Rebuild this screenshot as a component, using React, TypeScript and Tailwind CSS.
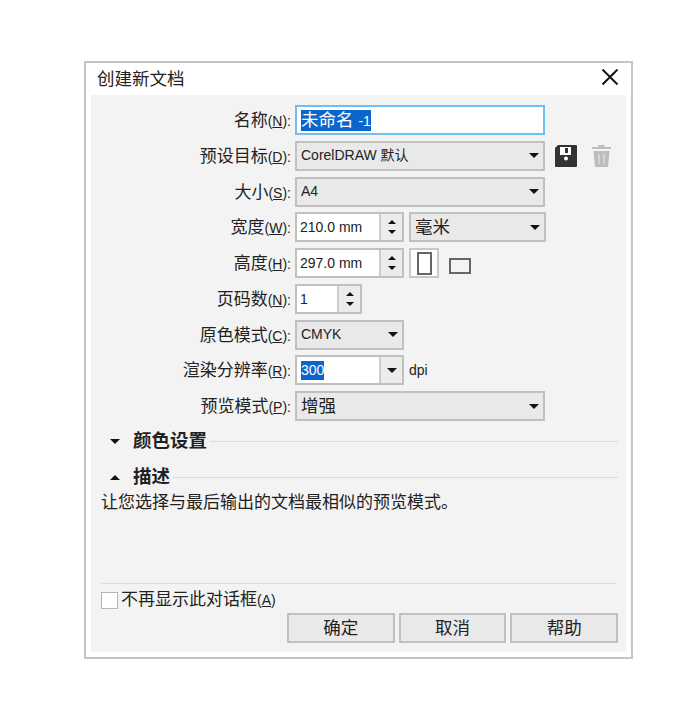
import type { ReactNode } from 'react';

const cjk = "font-['Liberation_Sans','Noto_Sans_CJK_SC',sans-serif]";

function Caret({ up = false, w = 16 }: { up?: boolean; w?: number }) {
  return (
    <svg width={w} height={w / 2} viewBox="0 0 16 8" className="block">
      <path d={up ? 'M0 8L8 0L16 8Z' : 'M0 0L16 0L8 8Z'} fill="#111" />
    </svg>
  );
}

function Label({ text, hint }: { text: string; hint: string }) {
  return (
    <div className="w-[204px] pr-[4px] pt-[2px] text-right text-[17px] text-[#222] leading-[30px] whitespace-nowrap">
      {text}
      <span className="text-[14px]">
        (<span className="underline">{hint}</span>):
      </span>
    </div>
  );
}

function Row({ label, hint, children }: { label: string; hint: string; children: ReactNode }) {
  return (
    <div className="flex items-center h-[30px]">
      <Label text={label} hint={hint} />
      {children}
    </div>
  );
}

function Select({ value, className, small = false }: { value: string; className: string; small?: boolean }) {
  return (
    <div className={`flex items-center justify-between h-[30px] border-2 border-[#c0c0c0] bg-[#e9e9e9] pl-[4px] pr-[4px] ${className}`}>
      <span className={`${small ? 'text-[14px]' : 'text-[17.5px]'} text-[#222] whitespace-nowrap`}>{value}</span>
      <Caret w={10} />
    </div>
  );
}

function Spinner({ value, width }: { value: string; width: string }) {
  return (
    <div className={`flex h-[30px] border-2 border-[#c0c0c0] bg-white ${width}`}>
      <div className="flex-1 pl-[3px] text-[14px] leading-[26px] text-[#222]">{value}</div>
      <div className="flex w-[23px] flex-col items-center justify-between border-l-2 border-[#cccccc] bg-[#ececec] py-[6px]">
        <Caret up w={8} />
        <Caret w={8} />
      </div>
    </div>
  );
}

function SectionHead({ title, up = false }: { title: string; up?: boolean }) {
  return (
    <div className="flex items-center h-[24px] pl-[19px] pr-[8px]">
      <Caret up={up} w={10} />
      <span className="ml-[13px] text-[18.5px] font-bold text-[#222] whitespace-nowrap">{title}</span>
      <div className="ml-[3px] h-[1px] flex-1 bg-[#dcdcdc]" />
    </div>
  );
}

function Btn({ text }: { text: string }) {
  return (
    <div className="flex h-[30px] w-[107.67px] items-center justify-center border-2 border-[#c0c0c0] bg-[#e9e9e9] text-[17.5px] text-[#222]">
      {text}
    </div>
  );
}

export default function App() {
  return (
    <div className={`h-[714px] w-[700px] bg-white pl-[84px] pt-[61px] ${cjk}`}>
      <div className="flex h-[598px] w-[549px] flex-col border-2 border-[#c4c4c4] bg-white px-[5px] pb-[5px]">
        <div className="flex h-[32px] items-center justify-between pl-[6px] pr-[6px]">
          <span className="text-[17.5px] text-[#222]">创建新文档</span>
          <svg width="18" height="16" viewBox="0 0 18 16" className="mb-[5px] mr-[1px]">
            <path d="M1.5 0.5L16.5 15.5M16.5 0.5L1.5 15.5" stroke="#111" strokeWidth="2" fill="none" />
          </svg>
        </div>
        <div className="flex flex-1 flex-col bg-[#f3f3f3] pt-[10px]">
          <div className="flex flex-col gap-[5.75px]">
            <Row label="名称" hint="N">
              <div className="flex h-[30px] w-[250px] items-center border-2 border-[#6cc0f5] bg-white pl-[4px]">
                <span className="bg-[#0a66cc] text-[17.5px] leading-[20px] text-white whitespace-nowrap">
                  未命名 <span className="text-[14px]">-1</span>
                </span>
              </div>
            </Row>
            <Row label="预设目标" hint="D">
              <Select value="CorelDRAW 默认" className="w-[250px]" small />
              <svg width="22" height="22" viewBox="0 0 22 22" className="ml-[10px]">
                <path d="M3 0H21A1 1 0 0 1 22 1V21A1 1 0 0 1 21 22H1A1 1 0 0 1 0 21V3Z" fill="#333" />
                <rect x="5" y="2" width="11" height="8" fill="#fff" />
                <rect x="10" y="3" width="3" height="5" fill="#333" />
                <circle cx="11" cy="13.5" r="2" fill="#fff" />
              </svg>
              <svg width="19" height="22" viewBox="0 0 19 22" className="ml-[15px]">
                <path d="M6.5 0H12.5V2H19V4H0V2H6.5Z" fill="#bdbdbd" />
                <path d="M1.5 6H17.5L16 22H3Z" fill="#bdbdbd" />
                <path d="M7 9V19M12 9V19" stroke="#d4d4d4" strokeWidth="2" />
              </svg>
            </Row>
            <Row label="大小" hint="S">
              <Select value="A4" className="w-[250px]" small />
            </Row>
            <Row label="宽度" hint="W">
              <Spinner value="210.0 mm" width="w-[109px]" />
              <Select value="毫米" className="ml-[5px] w-[137px]" />
            </Row>
            <Row label="高度" hint="H">
              <Spinner value="297.0 mm" width="w-[109px]" />
              <div className="ml-[5px] flex h-[30px] w-[30px] items-center justify-center border-2 border-[#c8c8c8] bg-white">
                <div className="h-[23px] w-[15px] border-2 border-[#666]" />
              </div>
              <div className="ml-[10px] mt-[5px] h-[16px] w-[22px] border-2 border-[#666]" />
            </Row>
            <Row label="页码数" hint="N">
              <Spinner value="1" width="w-[67px]" />
            </Row>
            <Row label="原色模式" hint="C">
              <Select value="CMYK" className="w-[109px]" small />
            </Row>
            <Row label="渲染分辨率" hint="R">
              <div className="flex h-[30px] w-[109px] border-2 border-[#c0c0c0] bg-white">
                <div className="flex flex-1 items-center pl-[4px]">
                  <span className="bg-[#0a66cc] text-[14px] leading-[19px] text-white">300</span>
                </div>
                <div className="flex w-[23px] items-center justify-center border-l-2 border-[#cccccc] bg-[#ececec]">
                  <Caret w={10} />
                </div>
              </div>
              <span className="ml-[5px] text-[14px] text-[#222]">dpi</span>
            </Row>
            <Row label="预览模式" hint="P">
              <Select value="增强" className="w-[250px]" />
            </Row>
          </div>
          <div className="mt-[8px]">
            <SectionHead title="颜色设置" />
          </div>
          <div className="mt-[12px]">
            <SectionHead title="描述" up />
          </div>
          <p className="mt-[1px] pl-[10px] text-[17px] leading-[26px] text-[#222] whitespace-nowrap">
            让您选择与最后输出的文档最相似的预览模式。
          </p>
          <div className="mx-[10px] mt-[67px] h-[1px] bg-[#dcdcdc]" />
          <div className="flex h-[29px] items-center pl-[10px] pt-[3px]">
            <div className="h-[17px] w-[17px] border border-[#b5b5b5] bg-white" />
            <span className="ml-[3px] text-[17px] text-[#222] whitespace-nowrap">
              不再显示此对话框
              <span className="text-[14px]">
                (<span className="underline">A</span>)
              </span>
            </span>
          </div>
          <div className="flex justify-end gap-[4px] pr-[8px]">
            <Btn text="确定" />
            <Btn text="取消" />
            <Btn text="帮助" />
          </div>
        </div>
      </div>
    </div>
  );
}
